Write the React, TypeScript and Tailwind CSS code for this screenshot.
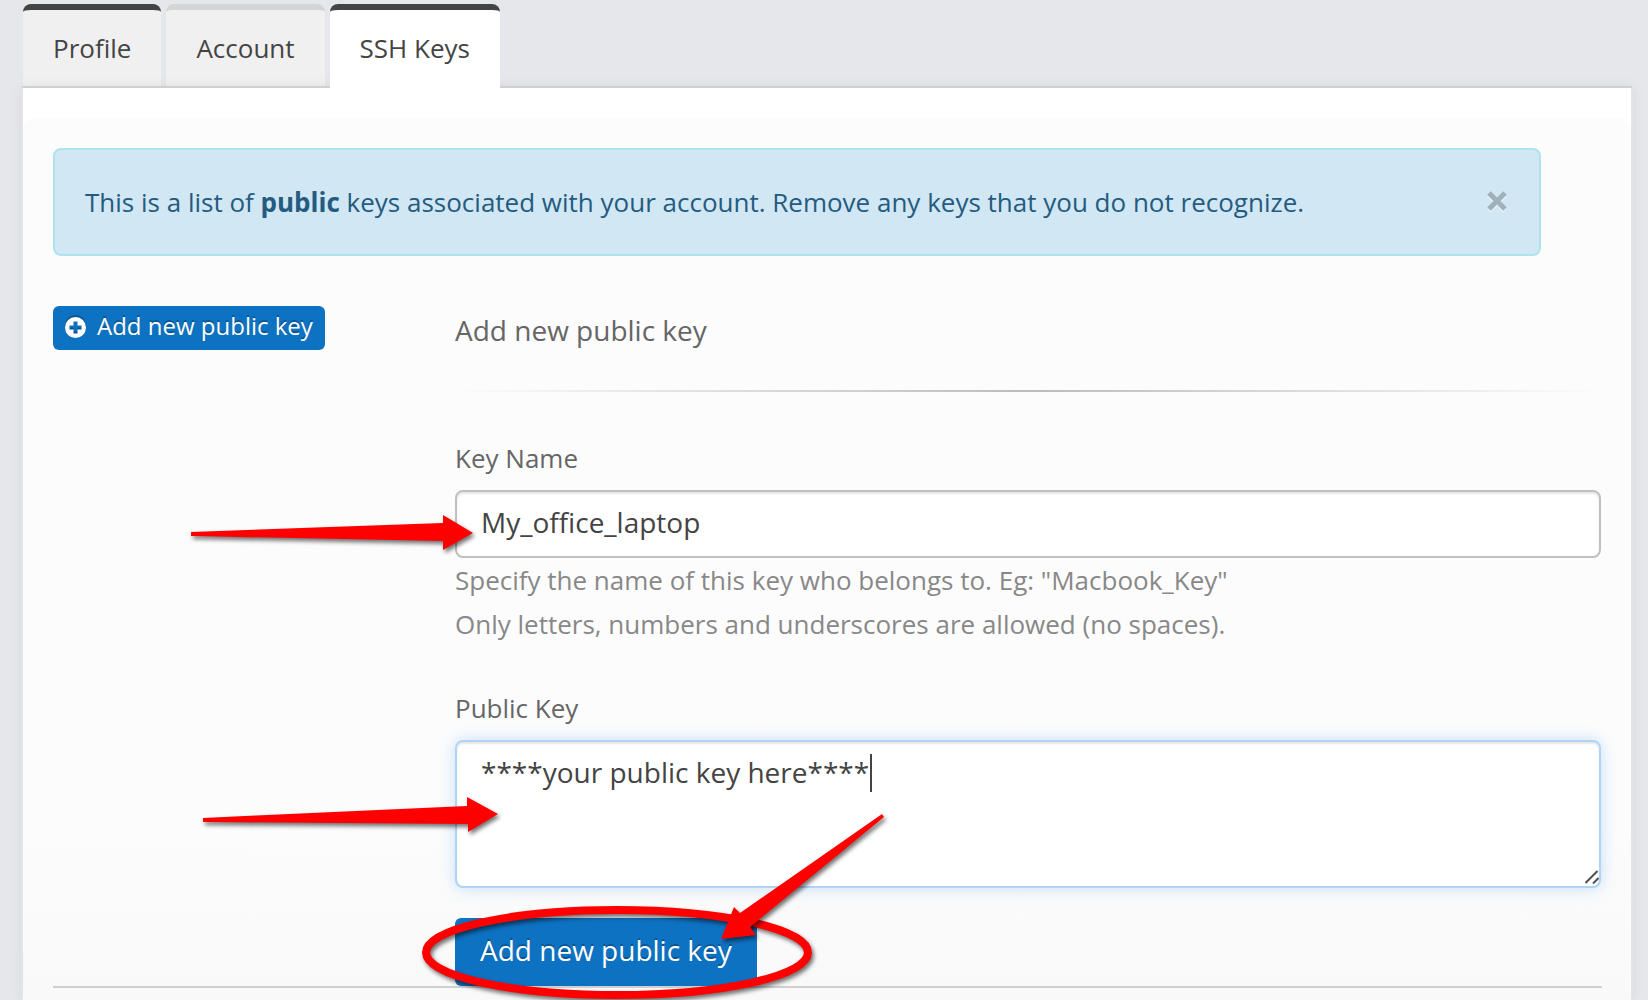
import React, { useState } from "react";

const ARROW_SHADOW = "drop-shadow-[2px_3px_2px_rgba(0,0,0,0.55)]";

const tabs = [
  { label: "Profile", className: "border-t-[#444444] bg-[#f0f0f0]" },
  { label: "Account", className: "border-t-[#d5d5d5] bg-[#f0f0f0]" },
  { label: "SSH Keys", className: "border-t-[#444444] bg-white" },
];

function Tabs() {
  return (
    <nav className="flex gap-[5px] pl-0.5" aria-label="Settings">
      {tabs.map((tab, index) => {
        const active = index === tabs.length - 1;
        return (
          <a
            key={tab.label}
            href="#"
            aria-current={active ? "page" : undefined}
            className={`rounded-t-lg border-t-[6px] px-[30px] pt-4 text-[#444444] ${
              active ? "relative -mb-0.5 pb-[18px]" : "pb-4"
            } ${tab.className}`}
          >
            {tab.label}
          </a>
        );
      })}
    </nav>
  );
}

function Alert({ onClose }: { onClose: () => void }) {
  return (
    <div
      role="alert"
      className="mr-[60px] flex items-center justify-between rounded-lg border-2 border-[#aee3ee] bg-[#d1e7f4] p-[30px] text-[#245b80]"
    >
      <p>
        This is a list of <strong className="font-bold">public</strong> keys associated with your account. Remove any
        keys that you do not recognize.
      </p>
      <button type="button" aria-label="Close" onClick={onClose} className="shrink-0">
        <svg width="24" height="24" viewBox="0 0 24 24" className="drop-shadow-[0_2px_0_rgba(255,255,255,0.4)]">
          <path d="M4 3 L20 19 M20 3 L4 19" stroke="#a1b1bb" strokeWidth="5" />
        </svg>
      </button>
    </div>
  );
}

function RightArrow({ className, points }: { className: string; points: string }) {
  return (
    <svg
      aria-hidden="true"
      width="300"
      height="40"
      viewBox="0 0 300 40"
      className={`pointer-events-none absolute overflow-visible ${ARROW_SHADOW} ${className}`}
    >
      <polygon points={points} fill="#ff0000" />
    </svg>
  );
}

function SubmitMarker() {
  return (
    <svg
      aria-hidden="true"
      width="470"
      height="200"
      viewBox="0 0 470 200"
      className="pointer-events-none absolute -top-[118px] -left-[35px] overflow-visible"
    >
      <ellipse
        cx="197"
        cy="152.5"
        rx="191"
        ry="42.5"
        fill="none"
        stroke="#ff0000"
        strokeWidth="8"
        className={ARROW_SHADOW}
      />
      <polygon
        points="462,14 464,17 330,127 336,135 301,139 314,107 320,113"
        fill="#ff0000"
        className={ARROW_SHADOW}
      />
    </svg>
  );
}

export default function App() {
  const [alertOpen, setAlertOpen] = useState(true);
  const [keyName, setKeyName] = useState("My_office_laptop");
  const [publicKey, setPublicKey] = useState("****your public key here****");

  return (
    <div className="flex min-h-screen flex-col overflow-hidden bg-[#e6e7eb] pt-1 pr-[15px] pl-[21px] font-['Open_Sans',sans-serif] text-[26px] leading-[44px] text-[#666666]">
      <Tabs />
      <main className="flex flex-1 flex-col border-x-2 border-t-2 border-x-[#e3e4e4] border-t-[#d0d0d0] bg-white pt-[30px] shadow-[0_0_12px_rgba(0,0,0,0.06)]">
        <div className="flex-1 rounded-t-xl bg-[#fcfcfc] bg-linear-to-b from-[#fcfcfc] from-80% to-[#f9f9f9] px-[30px] pt-[30px]">
          {alertOpen && <Alert onClose={() => setAlertOpen(false)} />}

          <div className="flex pt-[50px]">
            <div className="w-[402px] shrink-0">
              <button
                type="button"
                className="flex items-center gap-[11px] rounded-md bg-[#0e72c2] px-3 pb-1 text-2xl leading-[40px] text-white [text-shadow:0_-2px_0_rgba(0,0,0,0.25)]"
              >
                <svg
                  width="21"
                  height="21"
                  viewBox="0 0 21 21"
                  aria-hidden="true"
                  className="mt-0.5 drop-shadow-[0_-2px_0_rgba(0,0,0,0.25)]"
                >
                  <path
                    fillRule="evenodd"
                    fill="#ffffff"
                    d="M10.500 0a10.500 10.500 0 1 0 0 21a10.500 10.500 0 1 0 0-21zM8.500 4.500h4v4h4v4h-4v4h-4v-4h-4v-4h4z"
                  />
                </svg>
                Add new public key
              </button>
            </div>

            <form className="min-w-0 flex-1" onSubmit={(event) => event.preventDefault()}>
              <h1 className="pt-0.5 pb-[38px] text-[28px]">Add new public key</h1>
              <div className="h-0.5 bg-linear-to-r from-transparent via-[#bcbcbc] to-transparent" />

              <label htmlFor="key-name" className="mt-11 mb-2.5 block">
                Key Name
              </label>
              <div className="relative">
                <input
                  id="key-name"
                  type="text"
                  value={keyName}
                  onChange={(event) => setKeyName(event.target.value)}
                  aria-describedby="key-name-help"
                  className="block h-[68px] w-full rounded-lg border-2 border-[#c0c0c0] bg-white px-6 pt-[11px] pb-[15px] text-[28px] leading-[38px] text-[#444444] shadow-[inset_0_2px_2px_rgba(0,0,0,0.1)] outline-none"
                />
                <RightArrow
                  className="top-[25px] -left-[264px]"
                  points="0,17 252,8 252,0 282,18 252,35 252,26 0,21"
                />
              </div>
              <p id="key-name-help" className="text-[#888888]">
                Specify the name of this key who belongs to. Eg: "Macbook_Key"
                <br />
                Only letters, numbers and underscores are allowed (no spaces).
              </p>

              <label htmlFor="public-key" className="mt-10 mb-2.5 block">
                Public Key
              </label>
              <div className="relative">
                <textarea
                  id="public-key"
                  value={publicKey}
                  onChange={(event) => setPublicKey(event.target.value)}
                  className="block h-[148px] w-full resize-none rounded-lg border-2 border-[#b0d3f8] bg-white px-6 py-[11px] text-[28px] leading-[38px] text-[#444444] shadow-[inset_0_2px_2px_rgba(0,0,0,0.1),0_0_16px_rgba(120,180,245,0.4)] outline-none"
                />
                <div aria-hidden="true" className="pointer-events-none absolute top-3.5 left-[415px] h-[38px] w-0.5 bg-[#444444]" />
                <svg
                  aria-hidden="true"
                  width="14"
                  height="14"
                  viewBox="0 0 14 14"
                  className="pointer-events-none absolute right-0.5 bottom-1"
                >
                  <path d="M0.500 13 L12.500 1 M8 13.500 L13.500 8" stroke="#505050" strokeWidth="2" fill="none" />
                </svg>
                <RightArrow
                  className="top-[57px] -left-[252px]"
                  points="0,21 264,9 264,0 295,17 265,35 265,27 0,25"
                />
              </div>

              <div className="relative mt-[30px] w-fit">
                <button
                  type="submit"
                  className="block rounded-md bg-[#0e72c2] px-[25px] pt-[13px] pb-[17px] text-[28px] leading-[38px] text-white [text-shadow:0_-2px_0_rgba(0,0,0,0.25)]"
                >
                  Add new public key
                </button>
                <SubmitMarker />
              </div>
            </form>
          </div>
          <hr className="-mr-px border-t-2 border-[#d0d0d0]" />
        </div>
      </main>
    </div>
  );
}
